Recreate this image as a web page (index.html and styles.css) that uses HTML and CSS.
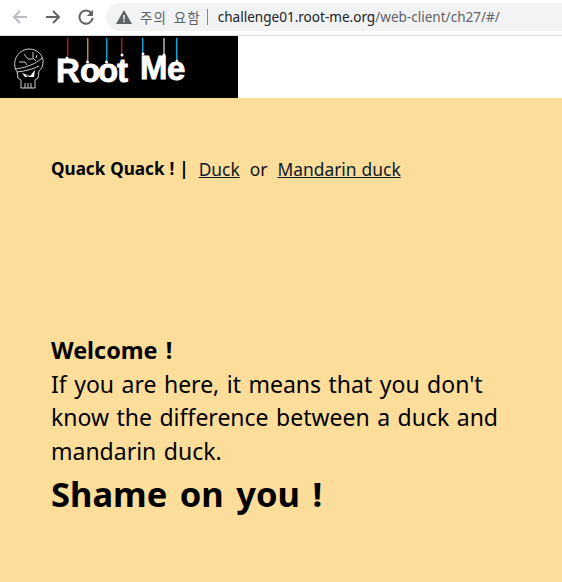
FILE: index.html
```html
<!DOCTYPE html>
<html lang="en">
<head>
<meta charset="utf-8">
<title>Quack Quack</title>
<link rel="stylesheet" href="styles.css">
</head>
<body>
<header class="toolbar">
  <svg class="nav-icon" width="18" height="18" viewBox="0 0 18 18"><path d="M16 9H3M9 3L3 9l6 6" fill="none" stroke="#b9bcc0" stroke-width="2"/></svg>
  <svg class="nav-icon" width="18" height="18" viewBox="0 0 18 18"><path d="M2 9h13M9 3l6 6-6 6" fill="none" stroke="#5f6368" stroke-width="2"/></svg>
  <svg class="nav-icon" width="18" height="18" viewBox="0 0 18 18"><path d="M14.200 5A6.600 6.600 0 1 0 15.600 10" fill="none" stroke="#5f6368" stroke-width="2"/><path d="M16 1.800V8h-6.200z" fill="#5f6368"/></svg>
  <div class="address">
    <svg class="warn" width="16" height="14" viewBox="0 0 16 14"><path d="M8 0l8 14H0z" fill="#5f6368"/><path d="M7.200 5h1.600v4.400H7.200zM7.200 10.400h1.600V12H7.200z" fill="#f1f3f4"/></svg>
    <span class="warn-text">주의 요함</span>
    <span class="sep"></span>
    <span class="url"><span class="host">challenge01.root-me.org</span>/web-client/ch27/#/</span>
  </div>
</header>
<div class="banner">
  <svg class="logo" width="238" height="62" viewBox="0 0 238 62">
    <g fill="none" stroke="#fff" stroke-width="0.800">
      <path d="M15 31C13 22 20 13 29 13C38 13 44 20 43 27C43 31 41 33 39 35L38 42L35 44V52H21V44L18 42L17 35C16 34 15 33 15 31Z"/>
      <path d="M15 33C25 32 36 28 42 22M17 36C26 35 33 33 39 30"/>
      <path d="M24 18l4 5h5M19 26h6l2 3M33 16v6l3 3M37 19l-1 3"/>
      <path d="M25 47v5M28 47v5M31 47v5"/>
    </g>
    <path d="M22 37l8 3 5-6-1 7h-9z" fill="#fff"/>
    <path d="M25 38.500l4 2-1 .800z" fill="#000"/>
    <g fill="none" stroke-width="1.500">
      <path d="M67.700 2v18" stroke="#a11f2d"/>
      <path d="M87.700 2v23" stroke="#c98a1e"/>
      <path d="M106.700 2v23" stroke="#0ca0c4"/>
      <path d="M121.700 2v16" stroke="#a11f2d"/>
      <path d="M142.700 2v15" stroke="#16a5d8"/>
      <path d="M164 2v16" stroke="#b9b7a8"/>
      <path d="M176.700 2v22" stroke="#16a5d8"/>
    </g>
    <g fill="#fff">
      <circle cx="67" cy="22" r="1.500"/>
      <circle cx="87.500" cy="26" r="1.500"/>
      <circle cx="106.500" cy="26" r="1.500"/>
      <circle cx="122" cy="19" r="1.500"/>
      <circle cx="143" cy="18" r="1.500"/>
      <circle cx="164" cy="19" r="1.500"/>
      <circle cx="177" cy="25" r="1.500"/>
    </g>
    <text class="logo-text" x="56 80 98 117 140 167" y="46 46 46 46 43 44">RootMe</text>
  </svg>
</div>
<main class="content">
  <nav class="menu">
    <strong>Quack Quack ! |</strong>
    <a href="#">Duck</a>
    <span>or</span>
    <a href="#">Mandarin duck</a>
  </nav>
  <section class="message">
    <strong>Welcome !</strong><br>
    If you are here, it means that you don't know the difference between a duck and mandarin duck.
    <h1>Shame on you !</h1>
  </section>
</main>
</body>
</html>
```
FILE: styles.css
```css
* { box-sizing: border-box; }
html, body { margin: 0; padding: 0; }
body {
  height: 582px;
  overflow: hidden;
  display: flex;
  flex-direction: column;
  background: #fcdd99;
  color: #000;
  font-family: "Noto Sans", "Noto Sans CJK KR", sans-serif;
}
.toolbar {
  height: 36px;
  background: #fff;
  border-bottom: 1px solid #dadce0;
  display: flex;
  align-items: center;
  gap: 15px;
  padding: 0 0 1px 11px;
}
.nav-icon { flex: none; }
.address {
  flex: 1;
  height: 28px;
  margin-left: -4px;
  padding-left: 10px;
  background: #f1f3f4;
  border-radius: 14px 0 0 14px;
  display: flex;
  align-items: center;
  font-size: 14px;
  color: #5f6368;
  white-space: nowrap;
  overflow: hidden;
}
.warn { flex: none; margin-right: 8px; }
.warn-text {
  font-family: "Noto Sans CJK KR", sans-serif;
  font-size: 13.500px;
  letter-spacing: 1px;
  word-spacing: 3px;
}
.sep { width: 1px; height: 16px; background: #80868b; margin: 0 10px 0 6px; }
.url { font-size: 13.550px; }
.host { color: #202124; }
.banner { height: 62px; background: #fff; display: flex; }
.logo { background: #000; display: block; }
.logo-text {
  font-family: "Liberation Sans", sans-serif;
  font-weight: 700;
  font-size: 33px;
  fill: #fff;
  stroke: #fff;
  stroke-width: 0.800px;
}
.content { padding: 58px 51px 0; }
.menu {
  display: flex;
  gap: 10px;
  font-size: 17.400px;
  line-height: 26px;
  color: #111;
  word-spacing: 0.500px;
}
.menu strong { color: #000; font-size: 17.100px; }
.menu a { color: #0b1a2a; text-decoration: underline; }
.message {
  margin-top: 152px;
  font-size: 23px;
  line-height: 33.500px;
  word-spacing: 1.500px;
}
.message strong { display: inline-block; font-size: 23.400px; word-spacing: 2px; }
.message h1 {
  margin: 1px 0 0;
  font-size: 34.500px;
  line-height: 50px;
  font-weight: 700;
  word-spacing: 3.500px;
}
```
